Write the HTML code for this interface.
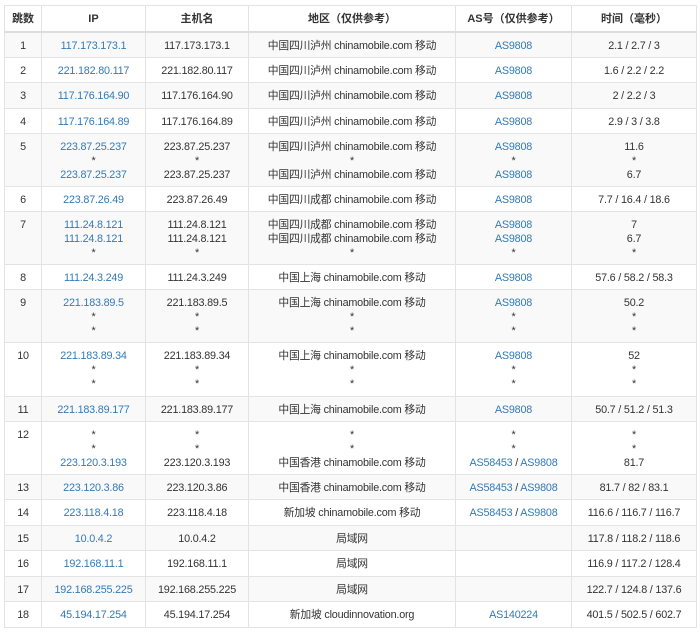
<!DOCTYPE html>
<html><head><meta charset="utf-8"><style>
body{margin:0;background:#fff;width:700px;height:635px;overflow:hidden}
table{position:absolute;left:4px;top:5px;border-collapse:collapse;table-layout:fixed;width:692px;font-family:"Liberation Sans","Noto Sans CJK SC",sans-serif;font-size:10.8px;letter-spacing:-0.2px;color:#333}
td,th{border:1px solid #e3e3e3;text-align:center;vertical-align:top;padding:6px 0 0;line-height:14px;box-sizing:border-box;overflow:hidden;white-space:nowrap}
th{font-weight:bold;height:26px;border-bottom:2px solid #ddd;padding-top:6px;font-size:11px;letter-spacing:0}
tr.g td{background:#f9f9f9}
a{color:#337ab7;text-decoration:none}
.h1 td{height:25.5px}.h2 td{height:52.5px}
</style></head><body>
<table>
<colgroup><col style="width:37px"><col style="width:104px"><col style="width:103px"><col style="width:207px"><col style="width:116px"><col style="width:125px"></colgroup>
<tr><th>跳数</th><th>IP</th><th>主机名</th><th>地区（仅供参考）</th><th>AS号（仅供参考）</th><th>时间（毫秒）</th></tr>
<tr class="g h1"><td>1</td><td><a>117.173.173.1</a></td><td>117.173.173.1</td><td>中国四川泸州 chinamobile.com 移动</td><td><a>AS9808</a></td><td>2.1 / 2.7 / 3</td></tr>
<tr class="h1"><td>2</td><td><a>221.182.80.117</a></td><td>221.182.80.117</td><td>中国四川泸州 chinamobile.com 移动</td><td><a>AS9808</a></td><td>1.6 / 2.2 / 2.2</td></tr>
<tr class="g h1"><td>3</td><td><a>117.176.164.90</a></td><td>117.176.164.90</td><td>中国四川泸州 chinamobile.com 移动</td><td><a>AS9808</a></td><td>2 / 2.2 / 3</td></tr>
<tr class="h1"><td>4</td><td><a>117.176.164.89</a></td><td>117.176.164.89</td><td>中国四川泸州 chinamobile.com 移动</td><td><a>AS9808</a></td><td>2.9 / 3 / 3.8</td></tr>
<tr class="g h2"><td>5</td><td><a>223.87.25.237</a><br>*<br><a>223.87.25.237</a></td><td>223.87.25.237<br>*<br>223.87.25.237</td><td>中国四川泸州 chinamobile.com 移动<br>*<br>中国四川泸州 chinamobile.com 移动</td><td><a>AS9808</a><br>*<br><a>AS9808</a></td><td>11.6<br>*<br>6.7</td></tr>
<tr class="h1"><td>6</td><td><a>223.87.26.49</a></td><td>223.87.26.49</td><td>中国四川成都 chinamobile.com 移动</td><td><a>AS9808</a></td><td>7.7 / 16.4 / 18.6</td></tr>
<tr class="g h2"><td>7</td><td><a>111.24.8.121</a><br><a>111.24.8.121</a><br>*</td><td>111.24.8.121<br>111.24.8.121<br>*</td><td>中国四川成都 chinamobile.com 移动<br>中国四川成都 chinamobile.com 移动<br>*</td><td><a>AS9808</a><br><a>AS9808</a><br>*</td><td>7<br>6.7<br>*</td></tr>
<tr class="h1"><td>8</td><td><a>111.24.3.249</a></td><td>111.24.3.249</td><td>中国上海 chinamobile.com 移动</td><td><a>AS9808</a></td><td>57.6 / 58.2 / 58.3</td></tr>
<tr class="g h2"><td>9</td><td><a>221.183.89.5</a><br>*<br>*</td><td>221.183.89.5<br>*<br>*</td><td>中国上海 chinamobile.com 移动<br>*<br>*</td><td><a>AS9808</a><br>*<br>*</td><td>50.2<br>*<br>*</td></tr>
<tr class="h2"><td style="height:54px">10</td><td><a>221.183.89.34</a><br>*<br>*</td><td>221.183.89.34<br>*<br>*</td><td>中国上海 chinamobile.com 移动<br>*<br>*</td><td><a>AS9808</a><br>*<br>*</td><td>52<br>*<br>*</td></tr>
<tr class="g h1"><td>11</td><td><a>221.183.89.177</a></td><td>221.183.89.177</td><td>中国上海 chinamobile.com 移动</td><td><a>AS9808</a></td><td>50.7 / 51.2 / 51.3</td></tr>
<tr class="h2"><td>12</td><td>*<br>*<br><a>223.120.3.193</a></td><td>*<br>*<br>223.120.3.193</td><td>*<br>*<br>中国香港 chinamobile.com 移动</td><td>*<br>*<br><a>AS58453</a> / <a>AS9808</a></td><td>*<br>*<br>81.7</td></tr>
<tr class="g h1"><td>13</td><td><a>223.120.3.86</a></td><td>223.120.3.86</td><td>中国香港 chinamobile.com 移动</td><td><a>AS58453</a> / <a>AS9808</a></td><td>81.7 / 82 / 83.1</td></tr>
<tr class="h1"><td>14</td><td><a>223.118.4.18</a></td><td>223.118.4.18</td><td>新加坡 chinamobile.com 移动</td><td><a>AS58453</a> / <a>AS9808</a></td><td>116.6 / 116.7 / 116.7</td></tr>
<tr class="g h1"><td>15</td><td><a>10.0.4.2</a></td><td>10.0.4.2</td><td>局域网</td><td></td><td>117.8 / 118.2 / 118.6</td></tr>
<tr class="h1"><td>16</td><td><a>192.168.11.1</a></td><td>192.168.11.1</td><td>局域网</td><td></td><td>116.9 / 117.2 / 128.4</td></tr>
<tr class="g h1"><td>17</td><td><a>192.168.255.225</a></td><td>192.168.255.225</td><td>局域网</td><td></td><td>122.7 / 124.8 / 137.6</td></tr>
<tr class="h1"><td>18</td><td><a>45.194.17.254</a></td><td>45.194.17.254</td><td>新加坡 cloudinnovation.org</td><td><a>AS140224</a></td><td>401.5 / 502.5 / 602.7</td></tr>
</table>
</body></html>
